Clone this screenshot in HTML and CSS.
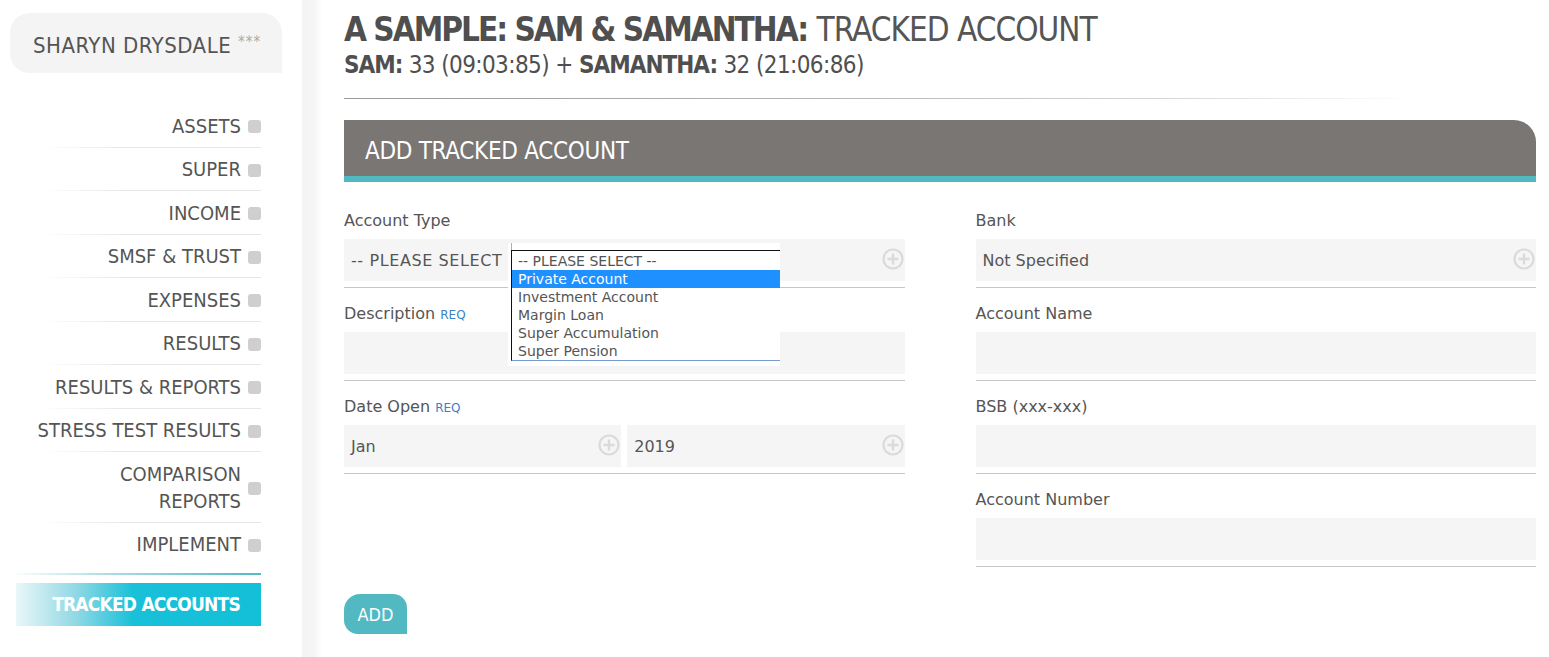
FILE: index.html
```html
<!DOCTYPE html>
<html lang="en">
<head>
<meta charset="utf-8">
<title>Tracked Account</title>
<link rel="stylesheet" href="styles.css">
</head>
<body>
<div class="page">
  <aside class="sidebar">
    <div class="user">SHARYN DRYSDALE <span class="stars">***</span></div>
    <nav class="nav">
      <a class="nav-item"><span class="nav-label">ASSETS</span><span class="sq"></span></a>
      <a class="nav-item"><span class="nav-label">SUPER</span><span class="sq"></span></a>
      <a class="nav-item"><span class="nav-label">INCOME</span><span class="sq"></span></a>
      <a class="nav-item"><span class="nav-label">SMSF &amp; TRUST</span><span class="sq"></span></a>
      <a class="nav-item"><span class="nav-label">EXPENSES</span><span class="sq"></span></a>
      <a class="nav-item"><span class="nav-label">RESULTS</span><span class="sq"></span></a>
      <a class="nav-item"><span class="nav-label">RESULTS &amp; REPORTS</span><span class="sq"></span></a>
      <a class="nav-item"><span class="nav-label">STRESS TEST RESULTS</span><span class="sq"></span></a>
      <a class="nav-item"><span class="nav-label">COMPARISON<br>REPORTS</span><span class="sq"></span></a>
      <a class="nav-item nav-last"><span class="nav-label">IMPLEMENT</span><span class="sq"></span></a>
      <div class="nav-divider"></div>
      <a class="nav-active">TRACKED ACCOUNTS</a>
    </nav>
  </aside>
  <div class="shade"></div>
  <main class="main">
    <h1 class="title"><b>A SAMPLE: SAM &amp; SAMANTHA:</b> <span class="light">TRACKED ACCOUNT</span></h1>
    <h2 class="subtitle"><b>SAM:</b> 33 (09:03:85) + <b>SAMANTHA:</b> 32 (21:06:86)</h2>
    <div class="rule"></div>

    <section class="panel">
      <div class="panel-head">ADD TRACKED ACCOUNT</div>
      <div class="form">
        <div class="col">
          <div class="field">
            <div class="label">Account Type</div>
            <div class="box">
              <span class="val val-wide">-- PLEASE SELECT</span>
              <svg class="plus" viewBox="0 0 22 22"><circle cx="11" cy="11" r="9.5"/><path d="M11 5.5v11M5.5 11h11"/></svg>
              <div class="dropdown">
                <div class="focus-mark"></div>
                <ul class="listbox">
                  <li>-- PLEASE SELECT --</li>
                  <li class="sel">Private Account</li>
                  <li>Investment Account</li>
                  <li>Margin Loan</li>
                  <li>Super Accumulation</li>
                  <li>Super Pension</li>
                </ul>
              </div>
            </div>
          </div>
          <div class="field">
            <div class="label">Description <span class="req">REQ</span></div>
            <div class="box"></div>
          </div>
          <div class="field">
            <div class="label">Date Open <span class="req">REQ</span></div>
            <div class="pair">
              <div class="box"><span class="val">Jan</span>
                <svg class="plus" viewBox="0 0 22 22"><circle cx="11" cy="11" r="9.5"/><path d="M11 5.5v11M5.5 11h11"/></svg></div>
              <div class="box"><span class="val">2019</span>
                <svg class="plus" viewBox="0 0 22 22"><circle cx="11" cy="11" r="9.5"/><path d="M11 5.5v11M5.5 11h11"/></svg></div>
            </div>
          </div>
        </div>
        <div class="col">
          <div class="field">
            <div class="label">Bank</div>
            <div class="box"><span class="val">Not Specified</span>
              <svg class="plus" viewBox="0 0 22 22"><circle cx="11" cy="11" r="9.5"/><path d="M11 5.5v11M5.5 11h11"/></svg></div>
          </div>
          <div class="field">
            <div class="label">Account Name</div>
            <div class="box"></div>
          </div>
          <div class="field">
            <div class="label">BSB (xxx-xxx)</div>
            <div class="box"></div>
          </div>
          <div class="field">
            <div class="label">Account Number</div>
            <div class="box"></div>
          </div>
        </div>
      </div>
      <button class="add">ADD</button>
    </section>
  </main>
</div>
</body>
</html>
```

FILE: styles.css
```css
* { box-sizing: border-box; }
html, body { margin: 0; padding: 0; background: #fff; }
body {
  font-family: "DejaVu Sans Condensed", "DejaVu Sans", sans-serif;
  color: #555;
  width: 1549px;
  height: 657px;
  overflow: hidden;
}
.page { display: flex; height: 657px; }

/* Sidebar */
.sidebar { width: 302px; flex: none; padding-top: 13px; }
.user {
  margin: 0 20px 0 10px;
  height: 60px;
  background: #f4f4f4;
  border-radius: 20px 20px 0 20px;
  padding-left: 23px;
  font-size: 22px;
  letter-spacing: 0.5px;
  line-height: 58px;
  color: #555;
  white-space: nowrap;
}
.stars { font-size: 15px; color: #aaa; vertical-align: 6px; letter-spacing: 1px; }

.nav { margin: 31px 41px 0 16px; display: flex; flex-direction: column; }
.nav-item {
  display: flex;
  justify-content: flex-end;
  align-items: center;
  gap: 7px;
  padding: 8.5px 0 8px;
  font-size: 20px;
  line-height: 27px;
  text-align: right;
  color: #555;
  background: linear-gradient(to right, rgba(230,230,230,0) 10%, #e6e6e6 45%, #e6e6e6) no-repeat left bottom / 100% 1px;
}
.nav-last { background: none; }
.sq { width: 13px; height: 13px; border-radius: 3px; background: #cfcfcf; flex: none; margin-top: 1px; }
.nav-divider {
  margin: 7px 0 0 -6px;
  height: 2px;
  background: linear-gradient(to right, rgba(82,185,195,0) 0%, rgba(82,185,195,0.5) 40%, #52b9c3);
}
.nav-active {
  margin-top: 8px;
  height: 43px;
  line-height: 43px;
  padding-right: 21px;
  text-align: right;
  color: #fff;
  font-weight: bold;
  font-size: 19px;
  letter-spacing: -0.8px;
  background: linear-gradient(to right, #eaf7f9 0%, #8ed8e4 25%, #18c0d8 48%, #13c0d8 100%);
}

.shade {
  width: 20px;
  flex: none;
  background: linear-gradient(to right, #f4f2f3 0%, #f6f5f5 60%, #fff 100%);
}

/* Main */
.main { flex: 1; padding: 0 13px 0 22px; }
.title {
  margin: 0;
  padding-top: 8px;
  font-size: 33px;
  line-height: 43px;
  font-weight: normal;
  color: #4f4f4f;
  white-space: nowrap;
}
.title b { font-weight: bold; letter-spacing: -2px; }
.title .light { color: #555; letter-spacing: -1px; }
.subtitle {
  margin: 0;
  font-size: 24px;
  line-height: 28px;
  letter-spacing: -0.6px;
  font-weight: normal;
  color: #4f4f4f;
}
.subtitle b { letter-spacing: -1px; }
.rule {
  margin-top: 19px;
  height: 1px;
  background: linear-gradient(to right, #9a9a9a 0%, #b5b5b5 40%, #d8d8d8 70%, rgba(255,255,255,0) 90%);
}

.panel { margin-top: 21px; }
.panel-head {
  height: 62px;
  background: #797674;
  border-bottom: 6px solid #52b9c3;
  border-radius: 0 22px 0 0;
  padding-left: 21px;
  font-size: 24px;
  letter-spacing: -0.3px;
  line-height: 63px;
  color: #fff;
}

.form {
  display: grid;
  grid-template-columns: 1fr 1fr;
  column-gap: 71px;
  padding-top: 29px;
  font-family: "DejaVu Sans", Verdana, sans-serif;
}
.field {
  padding-bottom: 6px;
  border-bottom: 1px solid #c6c6c6;
  margin-bottom: 16px;
}
.label { font-size: 16px; line-height: 20px; height: 20px; margin-bottom: 8px; color: #555; white-space: nowrap; }
.req { font-size: 12px; line-height: 12px; color: #3b82c4; }
.box {
  position: relative;
  height: 42px;
  background: #f5f5f5;
  display: flex;
  align-items: center;
  justify-content: space-between;
  padding: 0 1px 0 7px;
}
.val { font-size: 16px; color: #555; white-space: nowrap; }
.val-wide { letter-spacing: 0.6px; }
.plus { width: 22px; height: 22px; flex: none; margin-top: -2px; }
.plus circle { fill: none; stroke: #dadada; stroke-width: 2.2; }
.plus path { fill: none; stroke: #dadada; stroke-width: 2.4; }
.pair { display: grid; grid-template-columns: 1fr 1fr; gap: 6px; }

/* Open select list overlay */
.dropdown {
  position: absolute;
  left: 164px;
  top: 4px;
  width: 272px;
  height: 123px;
  background: #fff;
  z-index: 2;
}
.focus-mark { position: absolute; left: 3px; top: 0; width: 1px; height: 7px; background: #8ab4f8; }
.listbox {
  position: absolute;
  left: 3px;
  top: 7px;
  width: 269px;
  height: 111px;
  margin: 0;
  padding: 1px 0 0;
  list-style: none;
  border-top: 1px solid #111;
  border-left: 1px solid #111;
  border-bottom: 1px solid #7a9bd0;
  font-size: 14px;
  line-height: 18px;
  color: #555;
}
.listbox li { padding-left: 6px; height: 18px; }
.listbox li.sel { background: #1e90ff; color: #fff; }

.add {
  margin-top: 11px;
  width: 63px;
  height: 40px;
  border: 0;
  padding: 0;
  background: #52b9c3;
  color: #fff;
  font-family: "DejaVu Sans Condensed", "DejaVu Sans", sans-serif;
  font-size: 18px;
  border-radius: 16px 14px 0 14px;
}
```
